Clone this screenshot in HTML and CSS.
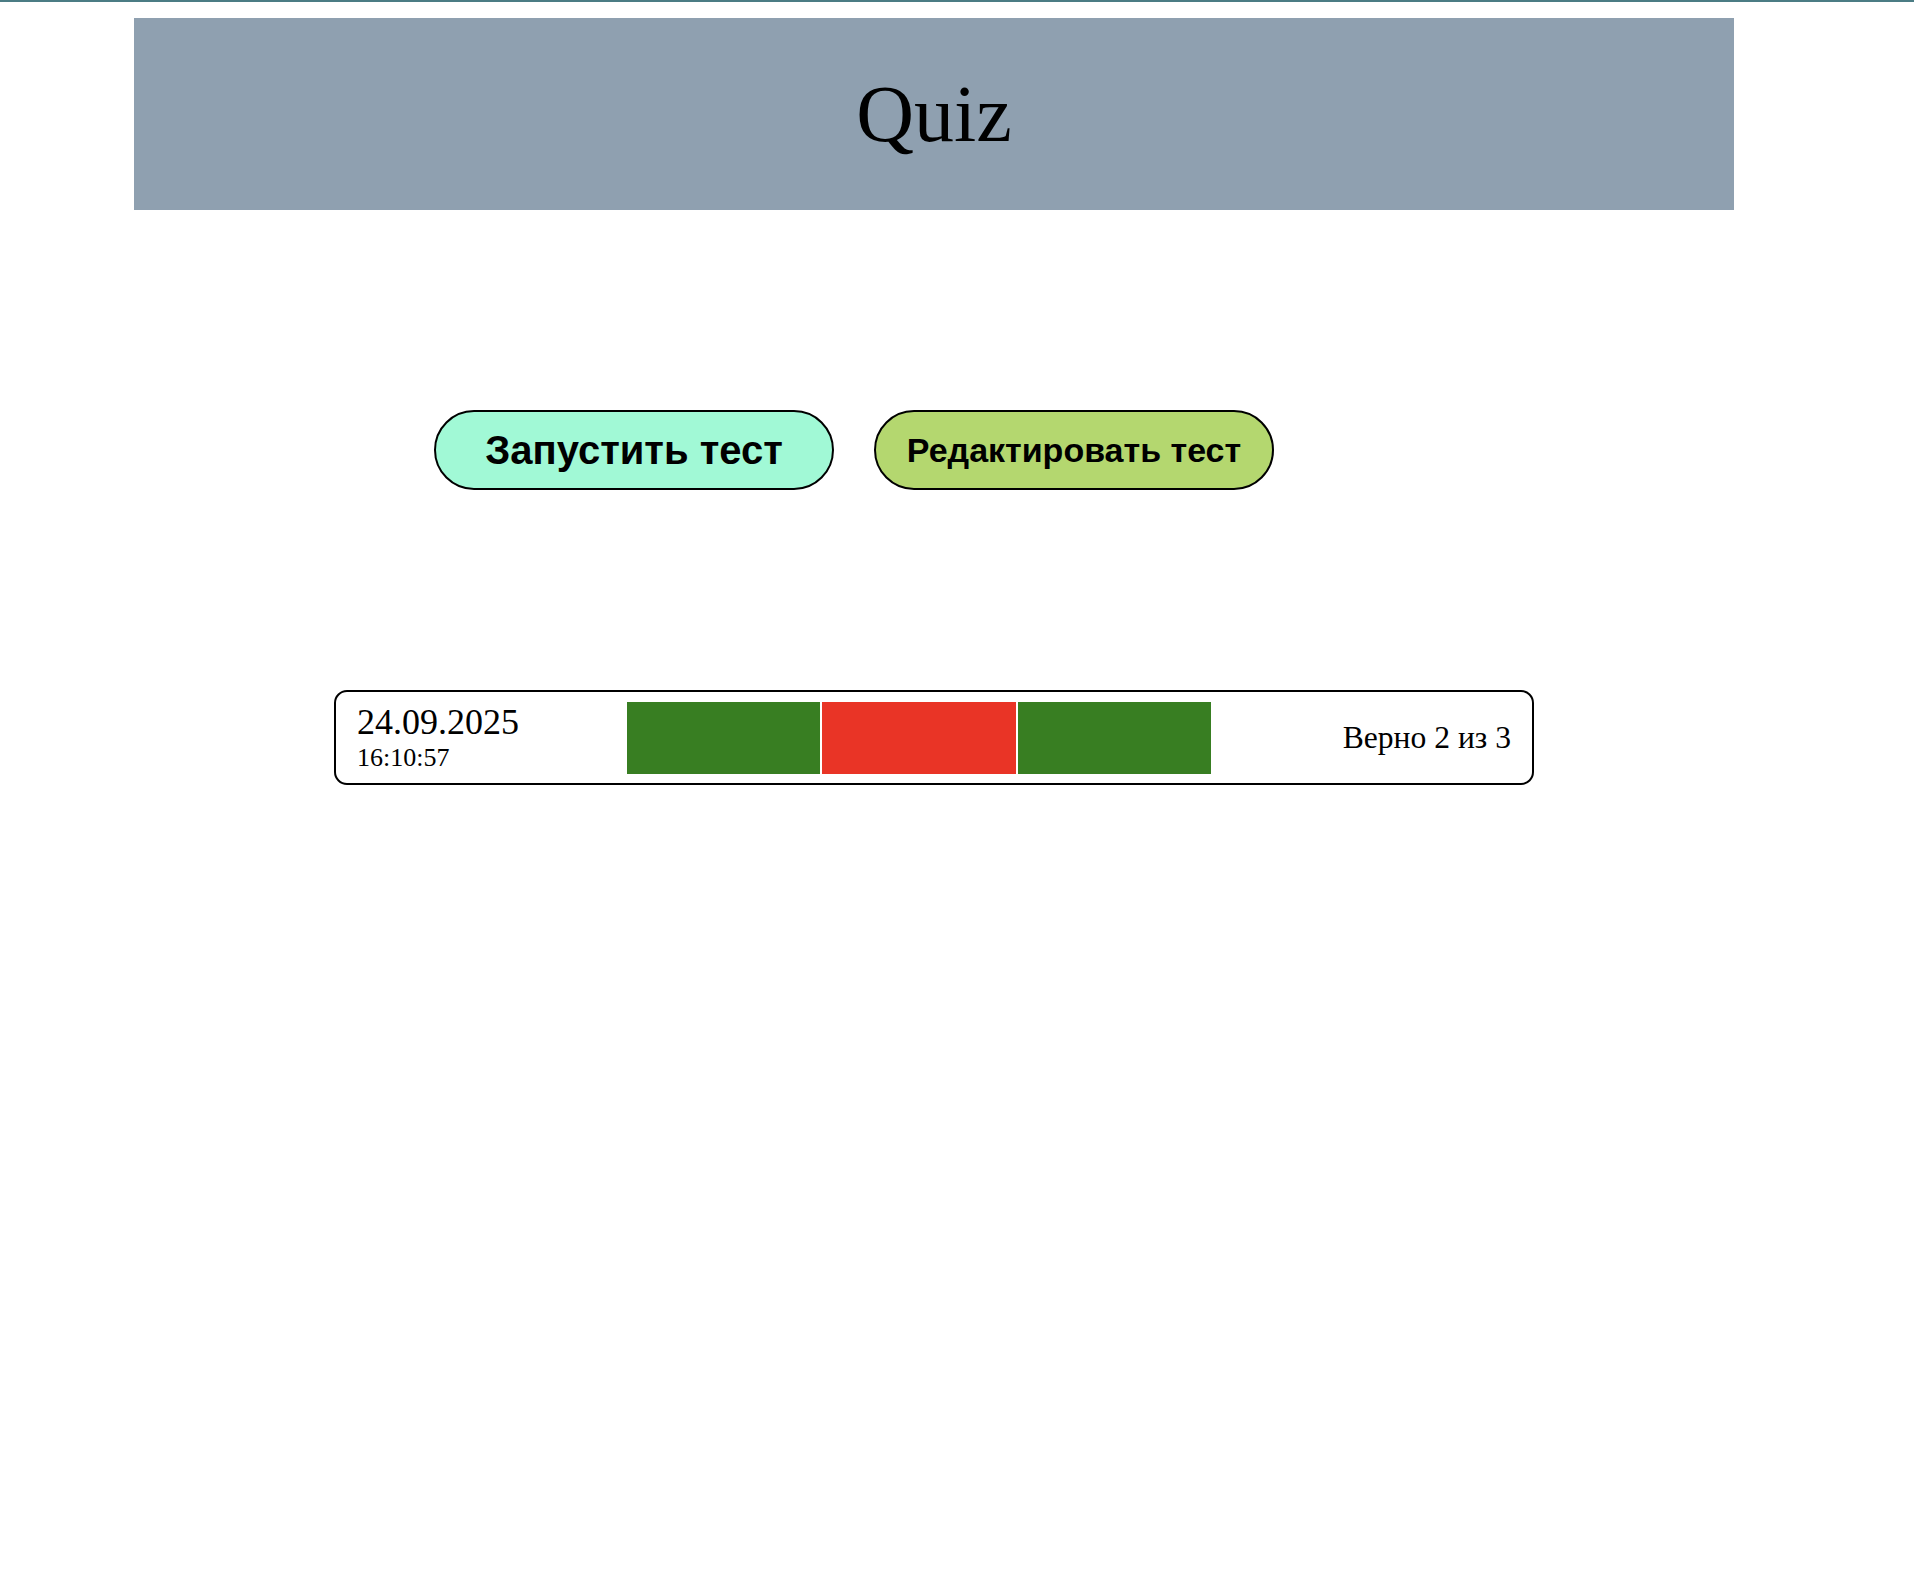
FILE: index.html
```html
<!DOCTYPE html>
<html lang="ru">
<head>
<meta charset="utf-8">
<title>Quiz</title>
<link rel="stylesheet" href="styles.css">
</head>
<body>
<div class="topline"></div>
<div class="page">
  <header class="header"><h1 class="title">Quiz</h1></header>
  <div class="actions">
    <button class="btn btn-start">Запустить тест</button>
    <button class="btn btn-edit">Редактировать тест</button>
  </div>
  <div class="result">
    <div class="when">
      <div class="date">24.09.2025</div>
      <div class="time">16:10:57</div>
    </div>
    <div class="bars">
      <div class="bar ok"></div>
      <div class="bar bad"></div>
      <div class="bar ok"></div>
    </div>
    <div class="score">Верно 2 из 3</div>
  </div>
</div>
</body>
</html>
```
FILE: styles.css
```css
html, body {
  margin: 0;
  padding: 0;
  background: #fff;
  font-family: "Liberation Serif", "Times New Roman", serif;
  color: #000;
}
.topline {
  height: 2px;
  background: #4b7c84;
}
.page {
  width: 1600px;
  margin: 16px 0 0 134px;
}
.header {
  height: 192px;
  background: #8fa0b0;
  display: flex;
  align-items: center;
  justify-content: center;
}
.title {
  margin: 0;
  font-weight: normal;
  font-size: 80px;
  line-height: normal;
}
.actions {
  display: flex;
  gap: 40px;
  padding: 200px 0 0 300px;
}
.btn {
  box-sizing: border-box;
  width: 400px;
  height: 80px;
  border: 2px solid #000;
  border-radius: 40px;
  font-family: "Liberation Sans", Arial, sans-serif;
  font-weight: bold;
  color: #000;
  padding: 0;
  display: flex;
  align-items: center;
  justify-content: center;
}
.btn-start {
  background: #a1f9d6;
  font-size: 40px;
}
.btn-edit {
  background: #b4d76f;
  font-size: 34px;
}
.result {
  box-sizing: border-box;
  width: 1200px;
  height: 95px;
  margin: 200px 0 0 200px;
  border: 2px solid #000;
  border-radius: 13px;
  padding: 0 21px 0 21px;
  display: flex;
  align-items: center;
}
.when {
  width: 270px;
  display: flex;
  flex-direction: column;
}
.date {
  font-size: 36px;
  line-height: 38px;
}
.time {
  font-size: 26px;
  line-height: 30px;
  margin-top: 2px;
}
.bars {
  display: flex;
  gap: 2px;
  width: 584px;
  height: 72px;
}
.bar {
  flex: 1;
}
.ok { background: #387e22; }
.bad { background: #e93426; }
.score {
  margin-left: auto;
  font-size: 31.6px;
}
```
